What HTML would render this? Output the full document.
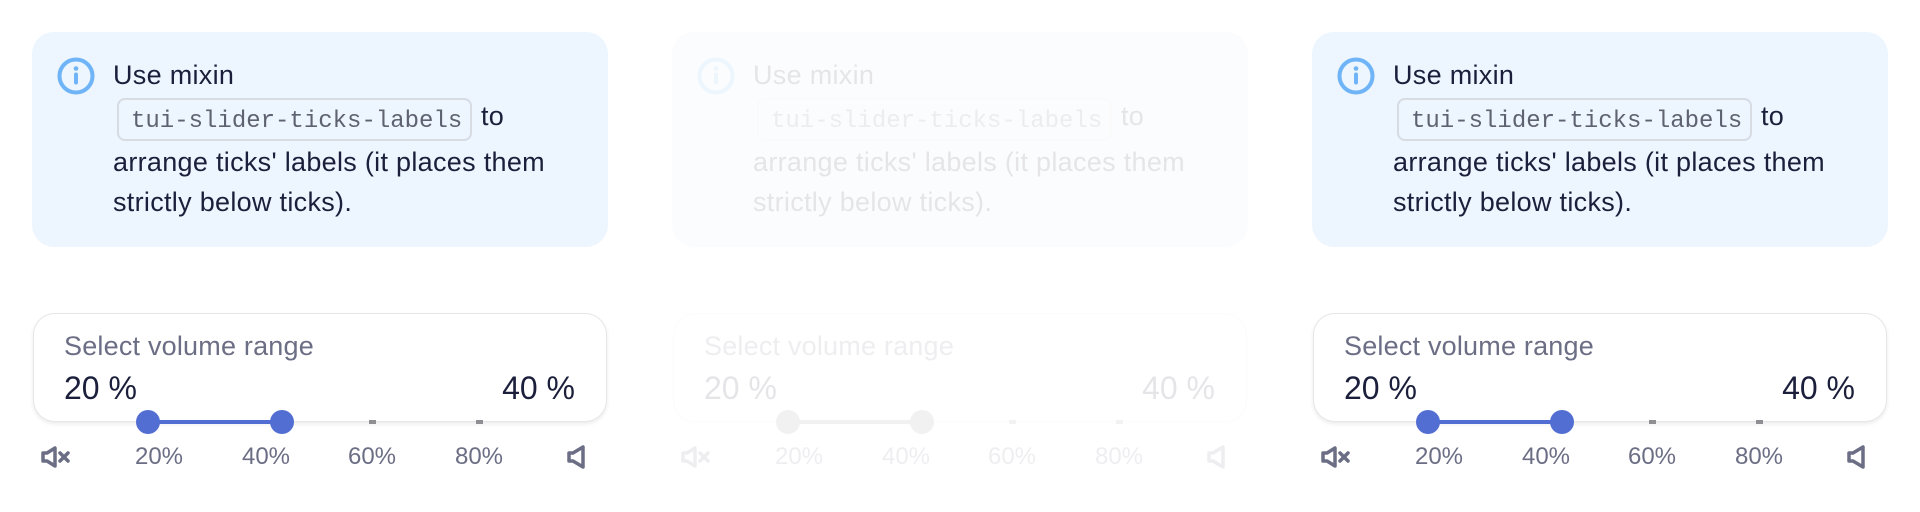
<!DOCTYPE html>
<html><head><meta charset="utf-8"><style>
*{margin:0;padding:0;box-sizing:border-box}
body{width:1920px;height:512px;background:#fff;position:relative;overflow:hidden;font-family:"Liberation Sans",sans-serif}
.col{position:absolute;top:0;width:640px;height:512px}
.info{position:absolute;left:32px;top:32px;width:576px;height:215px;background:#edf5fe;border-radius:22px}
.t{position:absolute;left:113px;font-size:27px;letter-spacing:0.3px;color:#1b1f3b;white-space:nowrap}
.code{position:absolute;left:117px;top:98px;width:355px;height:43px;border:2px solid #d7dbe2;border-radius:8px;font-family:"Liberation Mono",monospace;font-size:24px;color:#5f6270;padding:8px 0 0 12px;white-space:nowrap}
.card{position:absolute;left:33px;top:313px;width:574px;height:109px;background:#fff;border:1px solid #e6e6e9;border-radius:22px;box-shadow:0 2px 4px rgba(0,0,0,.08)}
.lab{position:absolute;left:64px;top:331px;font-size:27px;letter-spacing:0.2px;color:#6b6e84}
.val{position:absolute;top:370px;font-size:32px;color:#1b1f3b}
.tick{position:absolute;top:420px;width:7px;height:4px;background:#8e8e93}
.fill{position:absolute;left:148px;top:420px;width:134px;height:4px;background:#526ed3}
.th{position:absolute;top:410px;width:24px;height:24px;border-radius:50%;background:#526ed3}
.tl{position:absolute;top:443px;font-size:24px;color:#6b6e84;width:80px;text-align:center}
</style></head><body>

<div class="col" style="left:0">
<div class="info"></div>
<svg style="position:absolute;left:57px;top:57px" width="38" height="38" viewBox="0 0 38 38"><circle cx="19" cy="19" r="16.5" fill="none" stroke="#6fb4f6" stroke-width="4"/><circle cx="19" cy="11.5" r="2.3" fill="#6fb4f6"/><rect x="17" y="15.5" width="4" height="12" rx="2" fill="#6fb4f6"/></svg>
<div class="t" style="top:60px">Use mixin</div>
<div class="code">tui-slider-ticks-labels</div>
<div class="t" style="top:101px;left:481px">to</div>
<div class="t" style="top:147px">arrange ticks' labels (it places them</div>
<div class="t" style="top:187px">strictly below ticks).</div>
<div class="card"></div>
<div class="lab">Select volume range</div>
<div class="val" style="left:64px">20 %</div>
<div class="val" style="right:65px">40 %</div>
<div class="tick" style="left:156px"></div><div class="tick" style="left:262px"></div>
<div class="tick" style="left:369px"></div><div class="tick" style="left:476px"></div>
<div class="fill"></div>
<div class="th" style="left:136px"></div><div class="th" style="left:270px"></div>
<svg style="position:absolute;left:41px;top:446px" width="32" height="22" viewBox="0 0 32 22"><path d="M2 7h4l8-5v18l-8-5H2z" fill="none" stroke="#6b6e84" stroke-width="3.5" stroke-linejoin="round"/><path d="M19 7l8 8M27 7l-8 8" stroke="#6b6e84" stroke-width="3.5" stroke-linecap="round"/></svg>
<svg style="position:absolute;left:566px;top:445px" width="22" height="24" viewBox="0 0 22 24"><path d="M3 8h4l10-6v20l-10-6H3z" fill="none" stroke="#6b6e84" stroke-width="3.5" stroke-linejoin="round"/></svg>
<div class="tl" style="left:119px">20%</div><div class="tl" style="left:226px">40%</div>
<div class="tl" style="left:332px">60%</div><div class="tl" style="left:439px">80%</div>
</div>

<div class="col" style="left:640px;opacity:0.11">
<div class="info" style="background:#e0e6ee"></div>
<svg style="position:absolute;left:57px;top:57px" width="38" height="38" viewBox="0 0 38 38"><circle cx="19" cy="19" r="16.5" fill="none" stroke="#6fb4f6" stroke-width="4"/><circle cx="19" cy="11.5" r="2.3" fill="#6fb4f6"/><rect x="17" y="15.5" width="4" height="12" rx="2" fill="#6fb4f6"/></svg>
<div class="t" style="top:60px">Use mixin</div>
<div class="code">tui-slider-ticks-labels</div>
<div class="t" style="top:101px;left:481px">to</div>
<div class="t" style="top:147px">arrange ticks' labels (it places them</div>
<div class="t" style="top:187px">strictly below ticks).</div>
<div class="card"></div>
<div class="lab">Select volume range</div>
<div class="val" style="left:64px">20 %</div>
<div class="val" style="right:65px">40 %</div>
<div class="tick" style="left:369px"></div><div class="tick" style="left:476px"></div>
<div class="fill" style="background:#888"></div>
<div class="th" style="left:136px;background:#888"></div><div class="th" style="left:270px;background:#888"></div>
<svg style="position:absolute;left:41px;top:446px" width="32" height="22" viewBox="0 0 32 22"><path d="M2 7h4l8-5v18l-8-5H2z" fill="none" stroke="#6b6e84" stroke-width="3.5" stroke-linejoin="round"/><path d="M19 7l8 8M27 7l-8 8" stroke="#6b6e84" stroke-width="3.5" stroke-linecap="round"/></svg>
<svg style="position:absolute;left:566px;top:445px" width="22" height="24" viewBox="0 0 22 24"><path d="M3 8h4l10-6v20l-10-6H3z" fill="none" stroke="#6b6e84" stroke-width="3.5" stroke-linejoin="round"/></svg>
<div class="tl" style="left:119px">20%</div><div class="tl" style="left:226px">40%</div>
<div class="tl" style="left:332px">60%</div><div class="tl" style="left:439px">80%</div>
</div>

<div class="col" style="left:1280px">
<div class="info"></div>
<svg style="position:absolute;left:57px;top:57px" width="38" height="38" viewBox="0 0 38 38"><circle cx="19" cy="19" r="16.5" fill="none" stroke="#6fb4f6" stroke-width="4"/><circle cx="19" cy="11.5" r="2.3" fill="#6fb4f6"/><rect x="17" y="15.5" width="4" height="12" rx="2" fill="#6fb4f6"/></svg>
<div class="t" style="top:60px">Use mixin</div>
<div class="code">tui-slider-ticks-labels</div>
<div class="t" style="top:101px;left:481px">to</div>
<div class="t" style="top:147px">arrange ticks' labels (it places them</div>
<div class="t" style="top:187px">strictly below ticks).</div>
<div class="card"></div>
<div class="lab">Select volume range</div>
<div class="val" style="left:64px">20 %</div>
<div class="val" style="right:65px">40 %</div>
<div class="tick" style="left:156px"></div><div class="tick" style="left:262px"></div>
<div class="tick" style="left:369px"></div><div class="tick" style="left:476px"></div>
<div class="fill"></div>
<div class="th" style="left:136px"></div><div class="th" style="left:270px"></div>
<svg style="position:absolute;left:41px;top:446px" width="32" height="22" viewBox="0 0 32 22"><path d="M2 7h4l8-5v18l-8-5H2z" fill="none" stroke="#6b6e84" stroke-width="3.5" stroke-linejoin="round"/><path d="M19 7l8 8M27 7l-8 8" stroke="#6b6e84" stroke-width="3.5" stroke-linecap="round"/></svg>
<svg style="position:absolute;left:566px;top:445px" width="22" height="24" viewBox="0 0 22 24"><path d="M3 8h4l10-6v20l-10-6H3z" fill="none" stroke="#6b6e84" stroke-width="3.5" stroke-linejoin="round"/></svg>
<div class="tl" style="left:119px">20%</div><div class="tl" style="left:226px">40%</div>
<div class="tl" style="left:332px">60%</div><div class="tl" style="left:439px">80%</div>
</div>
</body></html>
